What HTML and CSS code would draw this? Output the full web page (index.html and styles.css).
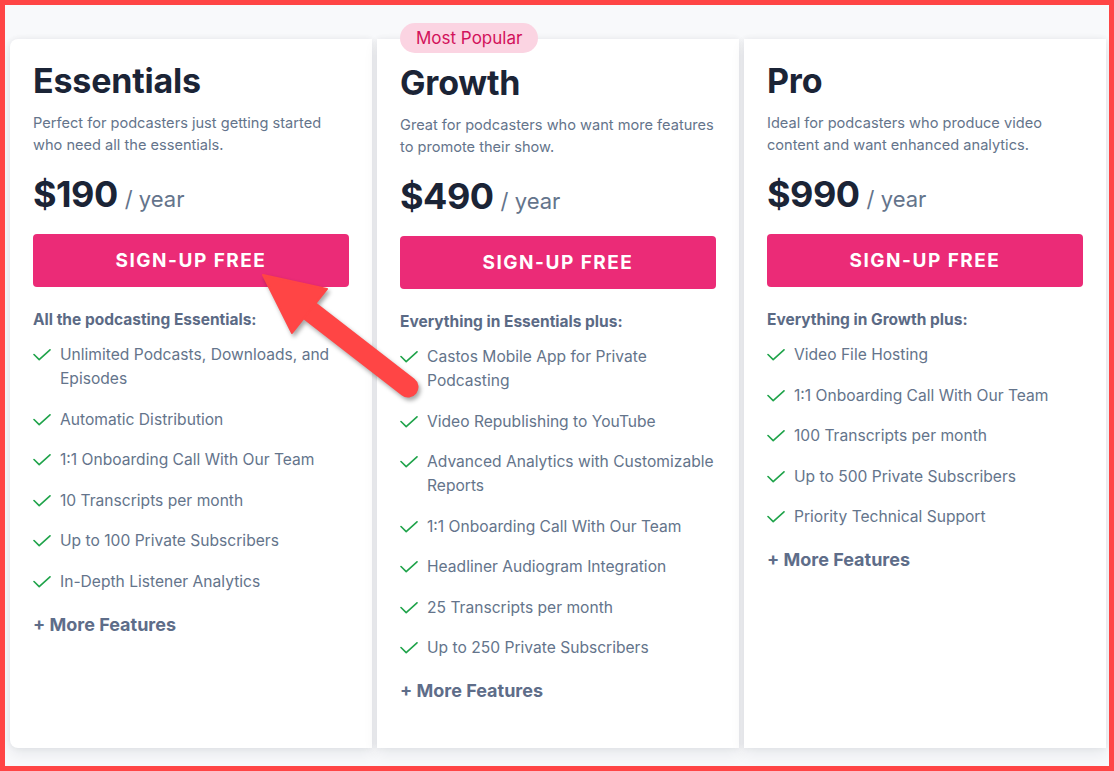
FILE: index.html
```html
<!DOCTYPE html>
<html lang="en">
<head>
<meta charset="utf-8">
<title>Pricing</title>
<link rel="stylesheet" href="styles.css">
</head>
<body>
<div class="frame">
  <div class="pricing">
    <section class="card card-first">
      <h2 class="plan">Essentials</h2>
      <p class="desc">Perfect for podcasters just getting started who need all the essentials.</p>
      <div class="price"><span class="amount">$190</span><span class="period">/ year</span></div>
      <a class="cta" href="#">SIGN-UP FREE</a>
      <h3 class="lead">All the podcasting Essentials:</h3>
      <ul class="features">
        <li><svg class="check" viewBox="0 0 18 12"><path d="M1 5.5 L6.2 10.6 L17 0.8"/></svg><span>Unlimited Podcasts, Downloads, and Episodes</span></li>
        <li><svg class="check" viewBox="0 0 18 12"><path d="M1 5.5 L6.2 10.6 L17 0.8"/></svg><span>Automatic Distribution</span></li>
        <li><svg class="check" viewBox="0 0 18 12"><path d="M1 5.5 L6.2 10.6 L17 0.8"/></svg><span>1:1 Onboarding Call With Our Team</span></li>
        <li><svg class="check" viewBox="0 0 18 12"><path d="M1 5.5 L6.2 10.6 L17 0.8"/></svg><span>10 Transcripts per month</span></li>
        <li><svg class="check" viewBox="0 0 18 12"><path d="M1 5.5 L6.2 10.6 L17 0.8"/></svg><span>Up to 100 Private Subscribers</span></li>
        <li><svg class="check" viewBox="0 0 18 12"><path d="M1 5.5 L6.2 10.6 L17 0.8"/></svg><span>In-Depth Listener Analytics</span></li>
      </ul>
      <a class="more" href="#">+ More Features</a>
    </section>

    <section class="card card-featured">
      <span class="badge">Most Popular</span>
      <h2 class="plan">Growth</h2>
      <p class="desc">Great for podcasters who want more features to promote their show.</p>
      <div class="price"><span class="amount">$490</span><span class="period">/ year</span></div>
      <a class="cta" href="#">SIGN-UP FREE</a>
      <h3 class="lead">Everything in Essentials plus:</h3>
      <ul class="features">
        <li><svg class="check" viewBox="0 0 18 12"><path d="M1 5.5 L6.2 10.6 L17 0.8"/></svg><span>Castos Mobile App for Private Podcasting</span></li>
        <li><svg class="check" viewBox="0 0 18 12"><path d="M1 5.5 L6.2 10.6 L17 0.8"/></svg><span>Video Republishing to YouTube</span></li>
        <li><svg class="check" viewBox="0 0 18 12"><path d="M1 5.5 L6.2 10.6 L17 0.8"/></svg><span>Advanced Analytics with Customizable Reports</span></li>
        <li><svg class="check" viewBox="0 0 18 12"><path d="M1 5.5 L6.2 10.6 L17 0.8"/></svg><span>1:1 Onboarding Call With Our Team</span></li>
        <li><svg class="check" viewBox="0 0 18 12"><path d="M1 5.5 L6.2 10.6 L17 0.8"/></svg><span>Headliner Audiogram Integration</span></li>
        <li><svg class="check" viewBox="0 0 18 12"><path d="M1 5.5 L6.2 10.6 L17 0.8"/></svg><span>25 Transcripts per month</span></li>
        <li><svg class="check" viewBox="0 0 18 12"><path d="M1 5.5 L6.2 10.6 L17 0.8"/></svg><span>Up to 250 Private Subscribers</span></li>
      </ul>
      <a class="more" href="#">+ More Features</a>
    </section>

    <section class="card">
      <h2 class="plan">Pro</h2>
      <p class="desc">Ideal for podcasters who produce video content and want enhanced analytics.</p>
      <div class="price"><span class="amount">$990</span><span class="period">/ year</span></div>
      <a class="cta" href="#">SIGN-UP FREE</a>
      <h3 class="lead">Everything in Growth plus:</h3>
      <ul class="features">
        <li><svg class="check" viewBox="0 0 18 12"><path d="M1 5.5 L6.2 10.6 L17 0.8"/></svg><span>Video File Hosting</span></li>
        <li><svg class="check" viewBox="0 0 18 12"><path d="M1 5.5 L6.2 10.6 L17 0.8"/></svg><span>1:1 Onboarding Call With Our Team</span></li>
        <li><svg class="check" viewBox="0 0 18 12"><path d="M1 5.5 L6.2 10.6 L17 0.8"/></svg><span>100 Transcripts per month</span></li>
        <li><svg class="check" viewBox="0 0 18 12"><path d="M1 5.5 L6.2 10.6 L17 0.8"/></svg><span>Up to 500 Private Subscribers</span></li>
        <li><svg class="check" viewBox="0 0 18 12"><path d="M1 5.5 L6.2 10.6 L17 0.8"/></svg><span>Priority Technical Support</span></li>
      </ul>
      <a class="more" href="#">+ More Features</a>
    </section>
  </div>

  <svg class="annotation" viewBox="0 0 1114 771" aria-hidden="true">
    <g class="arrow">
      <line x1="306" y1="308" x2="408" y2="387"/>
      <polygon points="263,275 327,289 292,333"/>
    </g>
  </svg>
</div>
</body>
</html>
```

FILE: styles.css
```css
* { box-sizing: border-box; }

html, body {
  margin: 0;
  padding: 0;
}

body {
  font-family: "Inter", "Liberation Sans", sans-serif;
  color: #64748b;
}

.frame {
  position: relative;
  width: 1114px;
  height: 771px;
  border: 5px solid #ff4545;
  background: #f8f9fb;
  overflow: hidden;
}

.pricing {
  display: grid;
  grid-template-columns: 362px 362px 362px;
  column-gap: 5px;
  height: 100%;
  padding: 34px 3px 18px 5px;
}

.card {
  position: relative;
  background: #ffffff;
  padding: 22px 23px 20px;
  box-shadow: 0 6px 14px rgba(15, 23, 42, 0.07), 0 0 6px rgba(15, 23, 42, 0.07);
}

.card-first {
  border-radius: 8px 0 0 8px;
}

.card-featured {
  padding-top: 24px;
}

.badge {
  position: absolute;
  top: -16px;
  left: 23px;
  height: 30px;
  padding: 0 16px;
  border-radius: 15px;
  background: #fbd4e2;
  color: #d2125b;
  font-size: 17px;
  line-height: 30px;
}

.plan {
  margin: 0;
  font-size: 34px;
  line-height: 40px;
  font-weight: 700;
  color: #1b2436;
  letter-spacing: -0.2px;
}

.desc {
  margin: 11px 0 0;
  font-size: 14.6px;
  line-height: 22px;
  color: #64748b;
}

.price {
  display: flex;
  align-items: baseline;
  gap: 7px;
  height: 44px;
  margin-top: 16px;
  line-height: 44px;
  white-space: nowrap;
}

.amount {
  font-size: 36px;
  font-weight: 700;
  color: #1b2436;
  letter-spacing: -0.5px;
}

.period {
  font-size: 22px;
  color: #64748b;
}

.cta {
  display: flex;
  align-items: center;
  justify-content: center;
  height: 53px;
  margin-top: 18px;
  border-radius: 4px;
  background: #eb2b77;
  color: #ffffff;
  font-size: 19px;
  font-weight: 700;
  letter-spacing: 1.5px;
  text-decoration: none;
}

.lead {
  margin: 22px 0 0;
  font-size: 15.5px;
  line-height: 22px;
  font-weight: 700;
  color: #5b6a85;
}

.features {
  list-style: none;
  margin: 12px 0 0;
  padding: 0;
  display: flex;
  flex-direction: column;
  gap: 16.5px;
}

.features li {
  display: flex;
  align-items: flex-start;
  gap: 9px;
  font-size: 15.6px;
  line-height: 24px;
  color: #64748b;
}

.check {
  flex: none;
  width: 18px;
  height: 12px;
  margin-top: 6px;
  fill: none;
  stroke: #1fa34a;
  stroke-width: 1.6;
  stroke-linecap: round;
  stroke-linejoin: round;
}

.more {
  display: block;
  margin-top: 19px;
  font-size: 18px;
  line-height: 24px;
  font-weight: 700;
  color: #5e6d89;
  text-decoration: none;
}

.annotation {
  position: absolute;
  top: -5px;
  left: -5px;
  width: 1114px;
  height: 771px;
  pointer-events: none;
}

.arrow {
  filter: drop-shadow(2px 3px 2px rgba(0, 0, 0, 0.35));
}

.arrow line {
  stroke: #ff4545;
  stroke-width: 21;
  stroke-linecap: round;
}

.arrow polygon {
  fill: #ff4545;
  stroke: #ff4545;
  stroke-width: 2;
  stroke-linejoin: round;
}
```
